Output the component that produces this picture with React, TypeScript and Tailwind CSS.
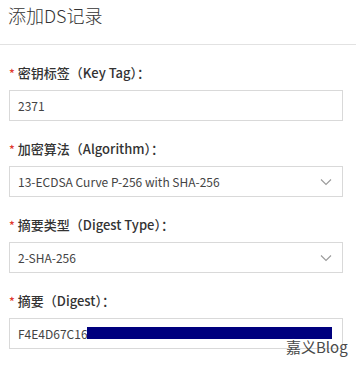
import React from "react";

const font = { fontFamily: '"Noto Sans CJK SC", "Noto Sans", sans-serif' };

const Chevron = () => (
  <svg width="12" height="8" viewBox="0 0 12 8" className="absolute right-[10px] top-1/2 -translate-y-1/2">
    <path d="M1 1.5 L6 6.5 L11 1.5" fill="none" stroke="#9a9a9a" strokeWidth="1.1" />
  </svg>
);

const Label: React.FC<{ text: string }> = ({ text }) => (
  <div className="h-[20px] leading-[20px] mb-[7px] text-[13px] font-medium text-[#333] flex items-center">
    <span className="text-[#e03a2f] text-[12px] mr-[3px] leading-none">*</span>
    <span>{text}</span>
  </div>
);

const Field: React.FC<{ label: string; value: string; select?: boolean; redact?: boolean }> = ({
  label,
  value,
  select,
  redact,
}) => (
  <div className="mb-[18px]">
    <Label text={label} />
    <div className="relative h-[31px] border border-[#d9d9d9] bg-white px-[8px] flex items-center text-[12px] text-[#444]">
      <span>{value}</span>
      {select && <Chevron />}
      {redact && <div className="absolute left-[77px] top-[8px] w-[245px] h-[12px] bg-[#00007e]" />}
    </div>
  </div>
);

export default function App() {
  return (
    <div className="relative w-[356px] h-[366px] bg-white overflow-hidden" style={font}>
      <div className="h-[45px] border-b border-[#e2e2e2] pt-[2px] pl-[8px]">
        <div className="text-[18px] leading-[26px] font-light text-[#333]">添加DS记录</div>
      </div>
      <div className="pt-[18px] pl-[9px] pr-[13px]">
        <Field label="密钥标签（Key Tag）：" value="2371" />
        <Field label="加密算法（Algorithm）：" value="13-ECDSA Curve P-256 with SHA-256" select />
        <Field label="摘要类型（Digest Type）：" value="2-SHA-256" select />
        <Field label="摘要（Digest）：" value="F4E4D67C16" redact />
      </div>
      <div
        className="absolute left-[286px] top-[338px] text-[15px] leading-[18px] text-[#4a4a4a]"
        style={{ textShadow: "0 0 2px #fff" }}
      >
        嘉义Blog
      </div>
    </div>
  );
}
